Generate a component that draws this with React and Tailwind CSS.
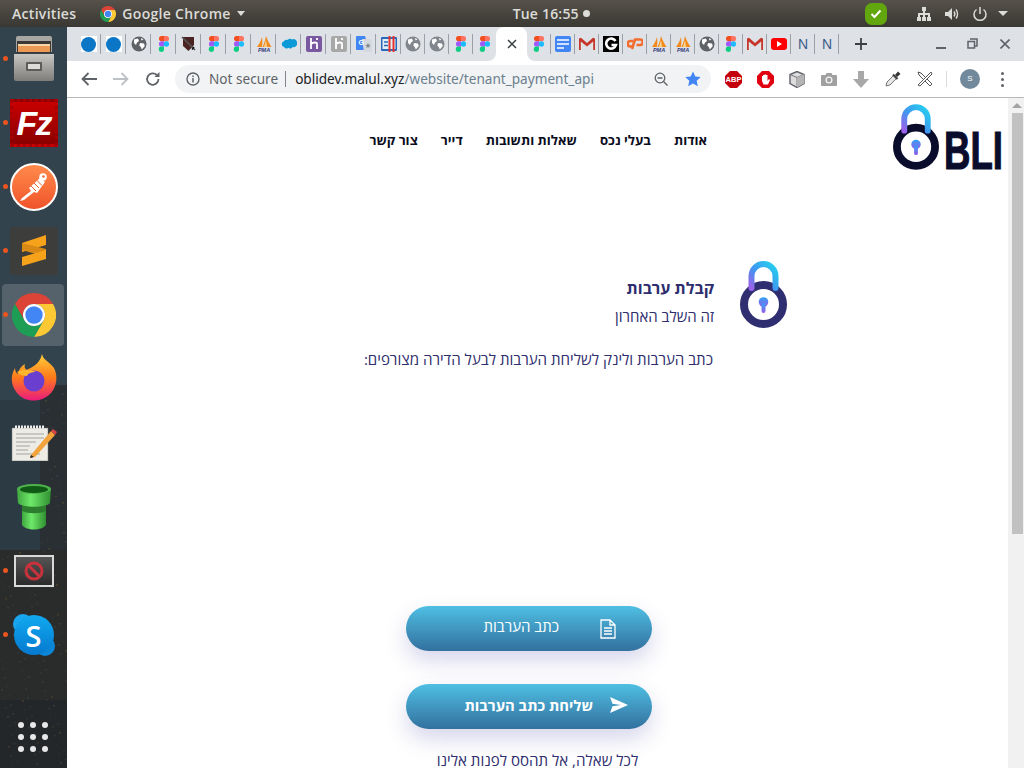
import React from "react";

const Chrome = ({ size = 16 }) => (
  <svg width={size} height={size} viewBox="0 0 48 48">
    <path d="M24 0A24 24 0 0 1 44.8 12H24A12 12 0 0 0 13.6 30L3.2 12A24 24 0 0 1 24 0Z" fill="#db4437" />
    <path d="M44.8 12A24 24 0 0 1 24 48L34.4 30A12 12 0 0 0 24 12Z" fill="#fcc934" />
    <path d="M3.2 12A24 24 0 0 0 24 48L34.4 30A12 12 0 0 1 13.6 30Z" fill="#1e9e55" />
    <circle cx="24" cy="24" r="12" fill="#fff" />
    <circle cx="24" cy="24" r="9.5" fill="#4285f4" />
  </svg>
);

const Figma = () => (
  <svg width="16" height="16" viewBox="0 0 16 16">
    <path d="M3 0h5v5.3H5.6A2.6 2.6 0 0 1 3 2.6 2.6 2.6 0 0 1 5.6 0Z" fill="#f24e1e" />
    <path d="M8 0h2.4a2.65 2.65 0 0 1 0 5.3H8Z" fill="#ff7262" />
    <path d="M8 5.3H5.6a2.65 2.65 0 0 0 0 5.3H8Z" fill="#a259ff" />
    <circle cx="10.4" cy="8" r="2.65" fill="#1abcfe" />
    <path d="M8 10.6H5.6a2.65 2.65 0 1 0 2.4 2.7Z" fill="#0acf83" />
  </svg>
);

const Globe = ({ c = "#5f6368" }) => (
  <svg width="16" height="16" viewBox="0 0 16 16">
    <circle cx="8" cy="8" r="7.5" fill={c} />
    <path d="M3 3.5 7 2.5 8 5 6 6.5 5 9 3 7ZM9 7l4 .5.8 2.5-3 3.5-1-2.5-1.5-1.5Z M10 2l2.5 1.5-2 1Z" fill="#fff" />
  </svg>
);

const Dot = () => (
  <div className="w-4 h-4 bg-white flex items-center justify-center">
    <div className="w-[15px] h-[15px] rounded-full bg-[#0b76c5]" />
  </div>
);

const Pma = () => (
  <svg width="16" height="16" viewBox="0 0 16 16">
    <path d="M1 11C3 8 5 5 6 1c.5 3 .5 6 0 10ZM6.500 11C8 8 9 5 10 0c1.500 4 3.500 8 5.500 11Z" fill="#f28a1e" />
    <path d="M8 11c.8-3 1.500-5 2-7 .5 3 1 5 1 7Z" fill="#fbd28a" />
    <text x="8" y="15.500" textAnchor="middle" fontSize="5.500" fontWeight="700" fontStyle="italic" fill="#33407f" fontFamily="Liberation Sans, sans-serif">PMA</text>
  </svg>
);

const Tile = ({ bg, children, cls = "" }) => (
  <div className={`w-4 h-4 flex items-center justify-center ${cls}`} style={{ background: bg }}>{children}</div>
);

const Gmail = () => (
  <svg width="16" height="14" viewBox="0 0 16 14">
    <path d="M3 6V13H1V3ZM13 6v7h2V3Z" fill="#e4e4e4" />
    <path d="M0 1.500V13h1.800V4.500L8 9.500l6.200-5V13H16V1.500L14 .8 8 6 2 .8Z" fill="#c5372c" />
  </svg>
);

const N = () => (
  <span className="text-[14px] leading-4 text-[#3c5a8a] font-['Liberation_Sans',sans-serif]">N</span>
);

const Fav = {
  dot: <Dot />,
  globe: <Globe />,
  globeL: <Globe c="#80868b" />,
  figma: <Figma />,
  pma: <Pma />,
  shield: (
    <svg width="16" height="16" viewBox="0 0 16 16">
      <path d="M2 1h11v8l-5.500 6L2 10Z" fill="#4b2322" />
      <path d="M1 1l13 13" stroke="#555" strokeWidth="1.600" />
      <path d="M13 11l-2 2.500" stroke="#111" strokeWidth="1.500" />
    </svg>
  ),
  sf: (
    <svg width="16" height="12" viewBox="0 0 16 12">
      <path d="M6.500 2A3 3 0 0 1 11 1.500 3.500 3.500 0 0 1 16 5a3.500 3.500 0 0 1-4.500 4 2.500 2.500 0 0 1-4 .8A3 3 0 0 1 3 9 3 3 0 0 1 3 3.200 3 3 0 0 1 6.500 2Z" fill="#0a9ad8" />
    </svg>
  ),
  her: (
    <Tile bg="#79589f" cls="rounded-[2px]">
      <svg width="10" height="12" viewBox="0 0 10 12"><path d="M2 0v11M2 6c2-2 6-2 6 0v5M8 0v2" stroke="#fff" strokeWidth="1.800" fill="none" /></svg>
    </Tile>
  ),
  herG: (
    <Tile bg="#a8a8a8" cls="rounded-[2px]">
      <svg width="10" height="12" viewBox="0 0 10 12"><path d="M2 0v11M2 6c2-2 6-2 6 0v5M8 0v2" stroke="#fff" strokeWidth="1.800" fill="none" /></svg>
    </Tile>
  ),
  tr: (
    <svg width="16" height="16" viewBox="0 0 16 16">
      <path d="M0 1a1 1 0 0 1 1-1h8l4 14H1a1 1 0 0 1-1-1Z" fill="#4285f4" />
      <path d="M6 3h9a1 1 0 0 1 1 1v11a1 1 0 0 1-1 1H8Z" fill="#d5d8dc" />
      <text x="2.500" y="9" fontSize="7" fontWeight="700" fill="#fff" fontFamily="Liberation Sans, sans-serif">G</text>
      <path d="M12 7l.8 1.800 1.800.2-1.400 1.200.4 1.800-1.600-1-1.600 1 .4-1.800L9.400 9l1.800-.2Z" fill="#80868b" />
    </svg>
  ),
  cal: (
    <svg width="16" height="16" viewBox="0 0 16 16">
      <rect width="16" height="14" y="1" rx="1" fill="#2a69b8" />
      <rect x="1.500" y="3" width="13" height="10" fill="#e3edf8" />
      <path d="M3 6h4M3 9.500h4" stroke="#2a69b8" strokeWidth="1.500" />
      <path d="M8.500 0v16M12.500 0v16" stroke="#e8332a" strokeWidth="2" />
    </svg>
  ),
  docs: (
    <Tile bg="#4285f4" cls="rounded-[2px]">
      <svg width="12" height="10" viewBox="0 0 12 10"><path d="M0 1h12M0 5h12M0 9h7" stroke="#fff" strokeWidth="1.700" /></svg>
    </Tile>
  ),
  gmail: <Gmail />,
  g: (
    <Tile bg="#000">
      <svg width="14" height="14" viewBox="0 0 14 14"><path d="M11.500 4A5 5 0 1 0 12 8H7.500" fill="none" stroke="#fff" strokeWidth="2.600" /></svg>
    </Tile>
  ),
  cp: (
    <svg width="16" height="12" viewBox="0 0 16 12">
      <path d="M6 3H3.500a2.500 2.500 0 0 0 0 5.500H6" fill="none" stroke="#f26c2e" strokeWidth="2.600" />
      <path d="M5 11 8 1.500h5a2.700 2.700 0 0 1 0 5.500H9.500" fill="none" stroke="#f26c2e" strokeWidth="2.600" />
    </svg>
  ),
  yt: (
    <div className="w-4 h-[12px] rounded-[3px] bg-[#f00] flex items-center justify-center">
      <div className="w-0 h-0 border-y-[3px] border-y-transparent border-l-[5px] border-l-white" />
    </div>
  ),
  n: <N />,
};

const leftTabs = ["dot", "dot", "globe", "figma", "shield", "figma", "figma", "pma", "sf", "her", "herG", "tr", "cal", "globeL", "globeL", "figma", "figma"];
const rightTabs = ["figma", "docs", "gmail", "g", "cp", "pma", "pma", "globe", "figma", "gmail", "yt", "n", "n"];

const TabIcon = ({ k, wide, sep }) => (
  <div className={`${wide ? "w-[25px]" : "w-6"} h-6 shrink-0 flex items-center justify-center relative`}>
    <div className="w-4 h-4 flex items-center justify-center">{Fav[k]}</div>
    {sep ? <div className="absolute right-0 top-[2px] h-5 w-px bg-[#9aa0a6]" /> : null}
  </div>
);

const Lock = ({ ring, w, h }) => {
  const id = ring === "#0a0c2c" ? "a" : "b";
  return (
    <svg width={w} height={h} viewBox="0 0 47 67">
      <defs>
        <linearGradient id={`sh${id}`} x1="0" y1="1" x2="1" y2="0">
          <stop offset="0" stopColor="#9a62ea" />
          <stop offset=".45" stopColor="#3f97f0" />
          <stop offset="1" stopColor="#22d3ee" />
        </linearGradient>
        <linearGradient id={`ke${id}`} x1="0" y1="0" x2="0" y2="1">
          <stop offset="0" stopColor="#2ea3f5" />
          <stop offset="1" stopColor="#9a5ce8" />
        </linearGradient>
      </defs>
      <circle cx="23.500" cy="43.500" r="19.500" fill="#fff" stroke={ring} strokeWidth="8" />
      <path d="M11.500 27V15a12 12 0 0 1 24 0v12" fill="none" stroke={`url(#sh${id})`} strokeWidth="6" strokeLinecap="round" />
      <circle cx="23.500" cy="41" r="4.800" fill={`url(#ke${id})`} />
      <rect x="21.500" y="42" width="4" height="10" rx="2" fill={`url(#ke${id})`} />
    </svg>
  );
};

const Ic = ({ children, vb = "0 0 16 16", s = 16 }) => (
  <svg width={s} height={s} viewBox={vb}>{children}</svg>
);

const DockItem = ({ dot, active, children, lift = "" }) => (
  <div className="h-16 w-full relative flex items-center justify-center shrink-0">
    {active && <div className="absolute left-[2px] top-[1px] w-[62px] h-[62px] rounded-[4px] bg-[#ffffff2b]" />}
    {dot && <div className="absolute left-[3px] top-[29px] w-[5px] h-[5px] rounded-full bg-[#e9541f]" />}
    <div className={`relative flex items-center justify-center ${lift}`}>{children}</div>
  </div>
);

const windows = Array.from({ length: 240 }, (_, i) => {
  const x = (i * 37) % 67;
  const y = 390 + ((i * 83) % 378);
  return { x, y, o: 0.08 + ((i * 13) % 10) / 45, c: i % 4 === 0 ? "#a87c36" : "#56606a" };
}).filter((w) => w.x > 40 || w.y > 550);

const Wallpaper = () => (
  <svg className="absolute inset-0" width="67" height="741" viewBox="0 27 67 741" preserveAspectRatio="none">
    <rect x="0" y="27" width="67" height="741" fill="#33434d" />
    <rect x="0" y="400" width="67" height="368" fill="#2c3a43" />
    <rect x="40" y="385" width="27" height="383" fill="#2a2f33" />
    <rect x="0" y="550" width="67" height="218" fill="#2a2b2b" />
    <rect x="0" y="700" width="67" height="68" fill="#232729" />
    {windows.map((w, i) => (
      <rect key={i} x={w.x} y={w.y} width="2" height="1.500" fill={w.c} opacity={w.o} />
    ))}
  </svg>
);

const Dock = () => (
  <aside className="w-[67px] h-full relative shrink-0 overflow-hidden">
    <Wallpaper />
    <div className="relative flex flex-col h-full">
      <DockItem dot>
        <svg width="42" height="46" viewBox="0 0 42 46">
          <defs>
            <linearGradient id="cab" x1="0" y1="0" x2="0" y2="1"><stop offset="0" stopColor="#c9c7c3" /><stop offset="1" stopColor="#7f7d7a" /></linearGradient>
          </defs>
          <path d="M3 2a2 2 0 0 1 2-2h32a2 2 0 0 1 2 2v14H3Z" fill="#a8a6a2" />
          <rect x="4" y="5" width="34" height="12" fill="#3c3835" />
          <rect x="5" y="10" width="32" height="6" fill="#eb9a55" />
          <rect x="5" y="8" width="32" height="2" fill="#f6d8a8" />
          <path d="M1 18h40v25a2 2 0 0 1-2 2H3a2 2 0 0 1-2-2Z" fill="url(#cab)" />
          <rect x="13" y="26" width="16" height="9" rx="1" fill="#5e5c59" />
          <rect x="15" y="28" width="12" height="5" fill="#dedcd8" />
        </svg>
      </DockItem>
      <DockItem dot>
        <div className="w-12 h-12 border-[3px] border-dotted border-[#a80000] flex items-center justify-center [background-image:linear-gradient(#c80000,#8a0000)]">
          <span className="text-white text-[34px] font-bold italic leading-none font-['Liberation_Sans',sans-serif] tracking-[-2px]">Fz</span>
        </div>
      </DockItem>
      <DockItem dot>
        <div className="w-12 h-12 rounded-full border-2 border-white bg-gradient-to-b from-[#ff8a4c] to-[#f0522a] flex items-center justify-center">
          <svg width="36" height="36" viewBox="0 0 36 36">
            <path d="M4 32 6 29 15 22 13 19 24 9 29 13 21 24 18 23 8 31Z" fill="#fff" />
            <circle cx="27" cy="8" r="3.800" fill="#fff" />
            <path d="M15 17l5 5M18 14l5 5M21 11.500l5 5" stroke="#f0622f" strokeWidth="1" />
            <circle cx="27.500" cy="7.500" r="1.200" fill="#f0622f" />
          </svg>
        </div>
      </DockItem>
      <DockItem dot>
        <div className="w-12 h-12 rounded-[3px] bg-[#3d3d3c] flex items-center justify-center">
          <svg width="28" height="32" viewBox="0 0 28 32">
            <path d="M26 0v10L2 17V8Z" fill="#f7a21b" />
            <path d="M2 15l24 7v-8L2 8Z" fill="#d98a16" />
            <path d="M26 15v9L2 31V22Z" fill="#f7a21b" />
          </svg>
        </div>
      </DockItem>
      <DockItem dot active>
        <Chrome size={44} />
      </DockItem>
      <DockItem lift="-mt-[3px]">
        <svg width="46" height="47" viewBox="0 0 46 47">
          <defs>
            <linearGradient id="fx" x1="0" y1="0" x2="0" y2="1"><stop offset="0" stopColor="#ffd03a" /><stop offset=".5" stopColor="#ff7a1a" /><stop offset="1" stopColor="#ea1c7d" /></linearGradient>
          </defs>
          <path d="M31 0c1 6 8 8 12 14 4 8 3 18-3 25-9 10-26 10-34 0C0 32-1 22 4 14c0 3 1 5 3 6 1-6 5-9 7-10-1 3 0 5 2 6 5-3 13-6 15-16Z" fill="url(#fx)" />
          <circle cx="23" cy="27" r="10.500" fill="#6a3fd0" />
          <path d="M6 18c6-3 13-3 19 0-4 0-8 1-9 4-3 0-7-1-10-4Z" fill="#ffb52c" />
        </svg>
      </DockItem>
      <DockItem>
        <svg width="46" height="36" viewBox="0 0 46 36">
          <rect x="1" y="3" width="36" height="33" fill="#ecebe5" stroke="#777" strokeWidth=".5" />
          <path d="M4 2h30" stroke="#eee" strokeWidth="3" strokeDasharray="2 1" />
          <path d="M5 9h28M5 13h28M5 17h20M5 21h14M5 25h12M5 29h24" stroke="#a4a49e" strokeWidth="1" />
          <path d="M20 30 40 6l4 4-20 22-5 1Z" fill="#f2a33c" />
          <path d="M40 6l2-2 4 3-2 3Z" fill="#d64545" />
          <path d="M19 33l1-3 3 2Z" fill="#222" />
        </svg>
      </DockItem>
      <DockItem>
        <svg width="34" height="46" viewBox="0 0 34 46">
          <defs>
            <linearGradient id="pi" x1="0" y1="0" x2="1" y2="0"><stop offset="0" stopColor="#3ea63e" /><stop offset=".4" stopColor="#6ee86a" /><stop offset="1" stopColor="#2f8f30" /></linearGradient>
          </defs>
          <path d="M5 20h24v21c-4 6-20 6-24 0Z" fill="url(#pi)" />
          <path d="M5 20h24v7c-6 3-18 3-24 0Z" fill="#2d7d2f" />
          <path d="M0 5h34l-1 14c-4 5-28 5-32 0Z" fill="url(#pi)" />
          <ellipse cx="17" cy="5" rx="17" ry="5" fill="#4eb24c" />
          <ellipse cx="17" cy="5.500" rx="14" ry="3.500" fill="#0f5a14" />
        </svg>
      </DockItem>
      <DockItem dot>
        <div className="w-10 h-8 bg-gradient-to-b from-[#555] to-[#2c2c2c] border-2 border-[#d9d9d9] flex items-center justify-center">
          <svg width="20" height="20" viewBox="0 0 20 20">
            <circle cx="10" cy="10" r="8" fill="none" stroke="#c8323c" strokeWidth="3" />
            <path d="M4.500 4.500l11 11" stroke="#c8323c" strokeWidth="3" />
          </svg>
        </div>
      </DockItem>
      <DockItem dot>
        <div className="relative w-[42px] h-[42px]">
          <div className="absolute left-0 top-0 w-5 h-5 rounded-full bg-[#1ba5ee]" />
          <div className="absolute right-0 bottom-0 w-5 h-5 rounded-full bg-[#0c86d8]" />
          <div className="absolute left-[1px] top-[1px] w-[40px] h-[40px] rounded-full bg-gradient-to-b from-[#12a9f0] to-[#0779cf] flex items-center justify-center">
            <span className="text-white text-[29px] font-semibold leading-none font-['Open_Sans',sans-serif]">S</span>
          </div>
        </div>
      </DockItem>
      <div className="mt-auto mb-[16px] ml-[18px] grid grid-cols-3 gap-x-[6px] gap-y-[6px] w-[30px]">
        {Array.from({ length: 9 }, (_, i) => (
          <div key={i} className="w-[6px] h-[6px] rounded-full bg-[#e8e8e8]" />
        ))}
      </div>
    </div>
  </aside>
);

const TopBar = () => (
  <header className="h-[27px] shrink-0 bg-gradient-to-b from-[#56524b] to-[#3a3833] flex items-center text-[14px] text-[#dcdcd8] font-['Open_Sans',sans-serif] font-semibold">
    <span className="ml-[12px] tracking-[.3px]">Activities</span>
    <span className="ml-[24px]"><Chrome size={16} /></span>
    <span className="ml-[6px] tracking-[.3px]">Google Chrome</span>
    <span className="ml-[6px] w-0 h-0 border-x-[4.500px] border-x-transparent border-t-[5px] border-t-[#dcdcd8]" />
    <span className="ml-[268px] tracking-[.2px] w-[73px] whitespace-nowrap">Tue 16:55</span>
    <span className="ml-[-3px] w-[7px] h-[7px] rounded-full bg-[#dcdcd8]" />
    <div className="ml-[275px] w-[22px] h-[22px] rounded-[7px] bg-[#63a70f] flex items-center justify-center">
      <svg width="12" height="10" viewBox="0 0 12 10"><path d="M1.500 5l3 3 6-6.500" fill="none" stroke="#fff" strokeWidth="2" /></svg>
    </div>
    <div className="ml-[29px]">
      <Ic><path d="M6 1h4v4H9v2h5v4h1v4h-4v-4h1V9H9v2h1v4H6v-4h1V9H4v2h1v4H1v-4h1V7h5V5H6Z" fill="#dcdcd8" /></Ic>
    </div>
    <div className="ml-[12px]">
      <Ic><path d="M1 6h3l4-4v12l-4-4H1Z" fill="#dcdcd8" /><path d="M10 5.500c1 1.500 1 3.500 0 5M12 3.500c2 2.500 2 6.500 0 9" fill="none" stroke="#dcdcd8" strokeWidth="1.400" /></Ic>
    </div>
    <div className="ml-[12px]">
      <Ic><path d="M4.500 3.500a6 6 0 1 0 7 0" fill="none" stroke="#dcdcd8" strokeWidth="1.500" /><path d="M8 1v7" stroke="#dcdcd8" strokeWidth="1.500" /></Ic>
    </div>
    <span className="ml-[10px] w-0 h-0 border-x-[5px] border-x-transparent border-t-[5px] border-t-[#dcdcd8]" />
  </header>
);

const TabStrip = () => (
  <div className="h-[34px] bg-white flex shrink-0">
    <div className="bg-[#dee1e6] rounded-br-[8px] flex items-center pl-[9px] w-[429px] shrink-0">
      {leftTabs.map((k, i) => (
        <TabIcon key={i} k={k} wide={i < 13} sep={i < leftTabs.length - 1} />
      ))}
    </div>
    <div className="w-[31px] h-[34px] relative shrink-0">
      <div className="absolute inset-x-0 top-0 h-2 bg-[#dee1e6]" />
      <div className="absolute inset-0 bg-white rounded-t-[8px] flex items-center justify-center">
        <svg width="10" height="10" viewBox="0 0 10 10"><path d="M1 1l8 8M9 1l-8 8" stroke="#3c4043" strokeWidth="1.500" /></svg>
      </div>
    </div>
    <div className="flex-1 bg-[#dee1e6] rounded-bl-[8px] flex items-center">
      {rightTabs.map((k, i) => (
        <TabIcon key={i} k={k} sep />
      ))}
      <svg className="ml-[16px]" width="12" height="12" viewBox="0 0 12 12"><path d="M6 0v12M0 6h12" stroke="#3c4043" strokeWidth="1.800" /></svg>
      <div className="ml-[69px] w-[10px] h-[2px] bg-[#5f6368] mt-[8px]" />
      <svg className="ml-[21px] -mt-[1px]" width="11" height="11" viewBox="0 0 11 11"><path d="M3 1h7v7H7M1 3.500h6.500V10H1Z" fill="none" stroke="#5f6368" strokeWidth="1.500" /></svg>
      <svg className="ml-[22px]" width="10" height="10" viewBox="0 0 10 10"><path d="M.5.500l9 9M9.500.500l-9 9" stroke="#5f6368" strokeWidth="1.600" /></svg>
    </div>
  </div>
);

const TB = ({ children }) => (
  <div className="w-8 h-8 flex items-center justify-center shrink-0">{children}</div>
);

const Toolbar = () => (
  <div className="h-[36px] shrink-0 bg-white border-b border-[#b8b8b8] box-content flex items-center pl-[6px]">
    <TB><svg width="16" height="14" viewBox="0 0 16 14"><path d="M16 7H2M7.500 1 1.500 7l6 6" fill="none" stroke="#5f6368" strokeWidth="1.800" /></svg></TB>
    <TB><svg width="16" height="14" viewBox="0 0 16 14"><path d="M0 7h14M8.500 1l6 6-6 6" fill="none" stroke="#bdc1c6" strokeWidth="1.800" /></svg></TB>
    <TB><svg width="16" height="16" viewBox="0 0 16 16"><path d="M13.500 8a5.700 5.700 0 1 1-1.700-4" fill="none" stroke="#5f6368" strokeWidth="1.800" /><path d="M14.500 1v5h-5Z" fill="#5f6368" /></svg></TB>
    <div className="ml-[6px] w-[536px] h-[28px] rounded-full bg-[#f1f3f4] flex items-center shrink-0 text-[13.600px] font-['Noto_Sans',sans-serif] whitespace-nowrap">
      <svg className="ml-[11px]" width="14" height="14" viewBox="0 0 14 14"><circle cx="7" cy="7" r="6" fill="none" stroke="#5f6368" strokeWidth="1.400" /><path d="M7 6v4.500M7 3.500v1.500" stroke="#5f6368" strokeWidth="1.500" /></svg>
      <span className="ml-[9px] text-[#5f6368]">Not secure</span>
      <span className="ml-[7px] w-px h-[16px] bg-[#80868b]" />
      <span className="ml-[9px] text-[#202124]">oblidev.malul.xyz<span className="text-[#6b7f8f]">/website/tenant_payment_api</span></span>
      <svg className="ml-auto" width="14" height="14" viewBox="0 0 14 14"><circle cx="6" cy="6" r="4.800" fill="none" stroke="#5f6368" strokeWidth="1.300" /><path d="M9.500 9.500 13.500 13.500M3.500 6h5" stroke="#5f6368" strokeWidth="1.400" /></svg>
      <svg className="ml-[17px] mr-[10px]" width="16" height="16" viewBox="0 0 16 16"><path d="M8 .5l2.300 5 5.400.6-4 3.700 1.100 5.400L8 12.500 3.200 15.200l1.100-5.400-4-3.700 5.400-.6Z" fill="#4285f4" /></svg>
    </div>
    <div className="ml-[6px]" />
    <TB>
      <svg width="17" height="17" viewBox="0 0 17 17">
        <path d="M5 0h7l5 5v7l-5 5H5l-5-5V5Z" fill="#c4000c" />
        <text x="8.500" y="11" textAnchor="middle" fontSize="7.500" fontWeight="700" fill="#fff" fontFamily="Liberation Sans, sans-serif">ABP</text>
      </svg>
    </TB>
    <TB>
      <svg width="17" height="17" viewBox="0 0 17 17">
        <path d="M5 0h7l5 5v7l-5 5H5l-5-5V5Z" fill="#e0000f" />
        <path d="M5 8V5h1v3-4h1.500v4-4.500H9V8V4h1.500v6L12 8l1 1-2 4.500H6.500L5 10Z" fill="#fff" />
      </svg>
    </TB>
    <TB>
      <svg width="16" height="17" viewBox="0 0 16 17">
        <path d="M8 .5l7 3v9l-7 4-7-4v-9Z" fill="#dcdcdc" stroke="#5f6368" strokeWidth="1.400" />
        <path d="M1 3.500 8 6.500l7-3M8 6.500v10" fill="none" stroke="#777" strokeWidth="1" />
        <path d="M8 6.500l7-3v9l-7 4Z" fill="#b5b5b5" />
      </svg>
    </TB>
    <TB>
      <svg width="16" height="14" viewBox="0 0 16 14">
        <path d="M1 3h3.500l1-2h5l1 2H15a1 1 0 0 1 1 1v9a1 1 0 0 1-1 1H1a1 1 0 0 1-1-1V4a1 1 0 0 1 1-1Z" fill="#a0a0a0" />
        <circle cx="8" cy="8" r="3.500" fill="#f4f4f4" />
        <circle cx="8" cy="8" r="2.200" fill="#a0a0a0" />
      </svg>
    </TB>
    <TB>
      <svg width="16" height="17" viewBox="0 0 16 17"><path d="M5 0h6v8h5l-8 9-8-9h5Z" fill="#a8a8a8" /></svg>
    </TB>
    <TB>
      <svg width="16" height="16" viewBox="0 0 16 16">
        <path d="M9 4 2 11l-1 4 4-1 7-7Z" fill="#e6e6e6" stroke="#777" strokeWidth="1" />
        <path d="M8 3.500 12.500 8" stroke="#444" strokeWidth="2.200" />
        <path d="M10 4l3-3.500L15.500 3 12 6Z" fill="#333" />
      </svg>
    </TB>
    <TB>
      <svg width="16" height="16" viewBox="0 0 16 16">
        <path d="M1 1l3 1 11 11-2 2L2 4Z" fill="#fff" stroke="#555" strokeWidth="1" />
        <path d="M14 1l1 2L3 15l-2-1Z" fill="#fff" stroke="#555" strokeWidth="1" />
      </svg>
    </TB>
    <div className="ml-[5px] w-px h-[16px] bg-[#dadce0]" />
    <div className="ml-[13px] w-5 h-5 rounded-full bg-[#72899c] text-white text-[8px] flex items-center justify-center font-['Liberation_Sans',sans-serif]">S</div>
    <div className="ml-[21px] flex flex-col gap-[3px]">
      <div className="w-[3px] h-[3px] rounded-full bg-[#5f6368]" />
      <div className="w-[3px] h-[3px] rounded-full bg-[#5f6368]" />
      <div className="w-[3px] h-[3px] rounded-full bg-[#5f6368]" />
    </div>
  </div>
);

const navItems = ["אודות", "בעלי נכס", "שאלות ותשובות", "דייר", "צור קשר"];

const Scrollbar = () => (
  <div className="w-4 shrink-0 bg-[#f1f1f1] flex flex-col items-center pt-[5px] pl-[2px]">
    <div className="w-0 h-0 border-x-[5px] border-x-transparent border-b-[5px] border-b-[#a3a3a3] mb-[5px] shrink-0" />
    <div className="w-[11px] h-[421px] bg-[#c1c1c1] shrink-0" />
  </div>
);

const Page = () => (
  <div className="flex flex-1 min-h-0 overflow-hidden bg-white">
    <main dir="rtl" className="flex-1 min-w-0 font-['Open_Sans','Noto_Sans',sans-serif] text-[#2e2d6d] overflow-hidden">
      <div className="flex items-start pr-[7px] pt-[6px]">
        <div className="shrink-0 flex items-start" dir="ltr">
          <Lock ring="#0a0c2c" w={46} h={66} />
          <svg className="ml-[7px] mt-[25px] overflow-visible" width="55" height="41" viewBox="0 0 55 41">
            <text x="-2" y="39.500" fontSize="54" fontWeight="700" fill="#0a0c2c" stroke="#0a0c2c" strokeWidth="1.200" textLength="59" lengthAdjust="spacingAndGlyphs" fontFamily="Liberation Sans, sans-serif">BLI</text>
          </svg>
        </div>
        <nav className="mr-[186px] mt-[26px] flex gap-[23px] text-[13.200px] font-bold text-[#0b0c1e] leading-[20px] whitespace-nowrap">
          {navItems.map((n) => (
            <span key={n}>{n}</span>
          ))}
        </nav>
      </div>
      <section className="mt-[91px] pr-[221px] flex items-start">
        <Lock ring="#2f2e70" w={47} h={67} />
        <div className="mr-[26px] pt-[15px]">
          <h2 className="text-[16px] font-bold leading-[24px]">קבלת ערבות</h2>
          <p className="text-[15px] leading-[24px] mt-[4px]">זה השלב האחרון</p>
        </div>
      </section>
      <p className="mt-[19px] mr-[295px] text-[15.100px] leading-[24px] whitespace-nowrap">כתב הערבות ולינק לשליחת הערבות לבעל הדירה מצורפים:</p>
      <div className="mt-[235px] mr-[356px] w-[246px] flex flex-col gap-[33px]">
        <button className="h-[45px] rounded-full bg-gradient-to-b from-[#4fbfe3] to-[#33719f] shadow-[0_10px_22px_rgba(70,70,170,0.22)] flex items-center pr-[35px] text-white text-[15px]">
          <svg width="18" height="20" viewBox="0 0 18 20" className="shrink-0">
            <path d="M2 1h9l5 5v13H2Z M11 1v5h5 M5 9h8M5 12h8M5 15h8" fill="none" stroke="#fff" strokeWidth="1.300" />
          </svg>
          <span className="mr-[40px] -mt-[4px]">כתב הערבות</span>
        </button>
        <button className="h-[45px] rounded-full bg-gradient-to-b from-[#4fbfe3] to-[#33719f] shadow-[0_10px_22px_rgba(70,70,170,0.22)] flex items-center pr-[24px] text-white text-[14.800px] font-bold">
          <svg width="18" height="16" viewBox="0 0 18 16" className="shrink-0 -mt-[4px]">
            <path d="M18 8 0 0l2.500 6.800L11 8l-8.500 1.200L0 16Z" fill="#fff" />
          </svg>
          <span className="mr-[17px] -mt-[3px]">שליחת כתב הערבות</span>
        </button>
      </div>
      <p className="mt-[19px] text-center text-[15.100px] leading-[24px]">לכל שאלה, אל תהסס לפנות אלינו</p>
    </main>
    <Scrollbar />
  </div>
);

export default function App() {
  return (
    <div className="w-[1024px] h-[768px] overflow-hidden flex flex-col">
      <TopBar />
      <div className="flex flex-1 min-h-0">
        <Dock />
        <div className="flex-1 min-w-0 flex flex-col">
          <TabStrip />
          <Toolbar />
          <Page />
        </div>
      </div>
    </div>
  );
}
